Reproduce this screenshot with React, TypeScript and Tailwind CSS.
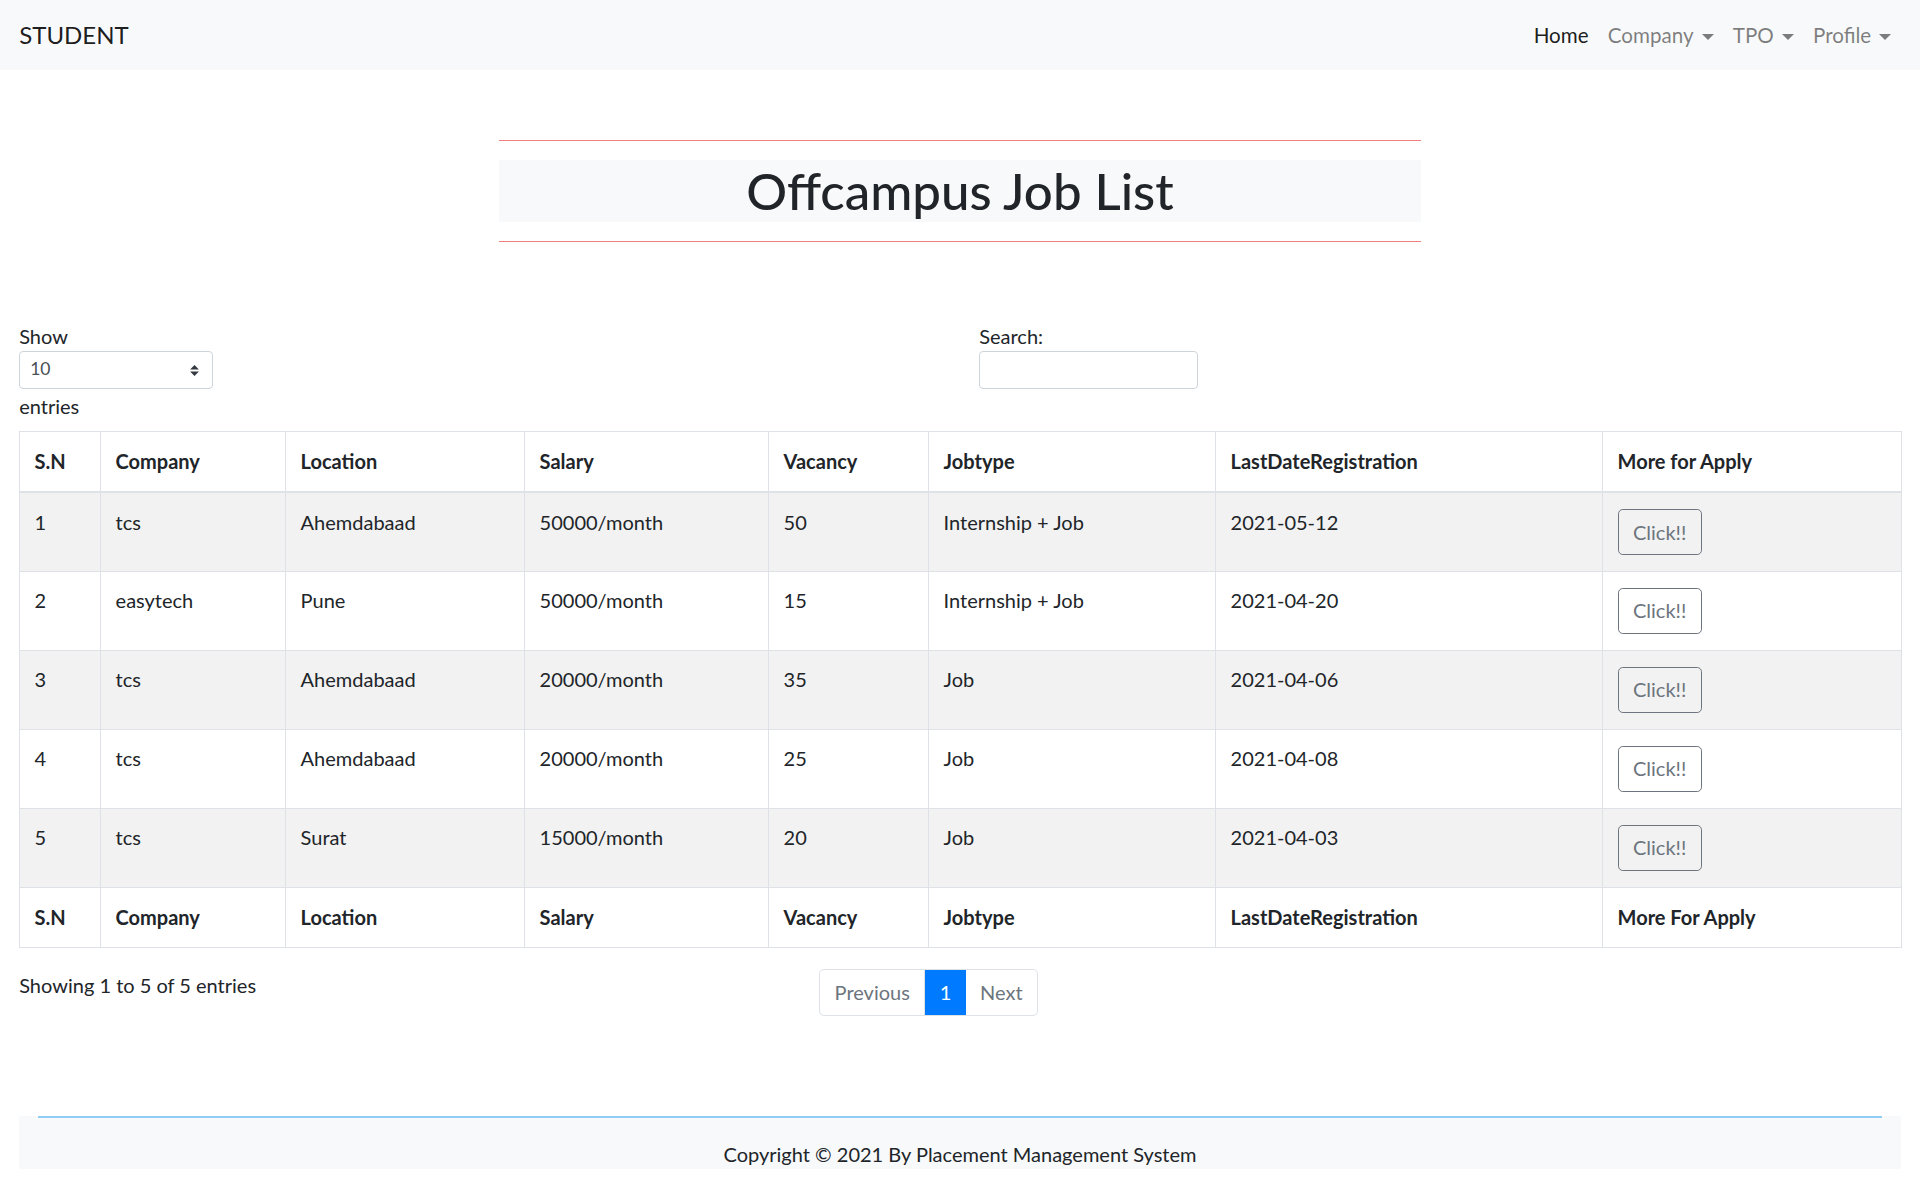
import React from "react";

const jobs = [
  { sn: 1, company: "tcs", location: "Ahemdabaad", salary: "50000/month", vacancy: 50, type: "Internship + Job", last: "2021-05-12" },
  { sn: 2, company: "easytech", location: "Pune", salary: "50000/month", vacancy: 15, type: "Internship + Job", last: "2021-04-20" },
  { sn: 3, company: "tcs", location: "Ahemdabaad", salary: "20000/month", vacancy: 35, type: "Job", last: "2021-04-06" },
  { sn: 4, company: "tcs", location: "Ahemdabaad", salary: "20000/month", vacancy: 25, type: "Job", last: "2021-04-08" },
  { sn: 5, company: "tcs", location: "Surat", salary: "15000/month", vacancy: 20, type: "Job", last: "2021-04-03" },
];

const widths = ["w-[81px]", "w-[185px]", "w-[239px]", "w-[244px]", "w-[160px]", "w-[287px]", "w-[387px]", "w-[299px]"];

function Caret() {
  return (
    <span className="ml-[8px] inline-block h-0 w-0 border-x-[6px] border-t-[6px] border-x-transparent border-t-current align-[3px]" />
  );
}

function HeadRow({ last }: { last: string }) {
  const cols = ["S.N", "Company", "Location", "Salary", "Vacancy", "Jobtype", "LastDateRegistration", last];
  return (
    <tr>
      {cols.map((c) => (
        <th key={c} className="border border-[#dee2e6] px-[14.4px] py-[15.4px] text-left font-bold">
          {c}
        </th>
      ))}
    </tr>
  );
}

export default function App() {
  return (
    <div className="min-h-[1188px] bg-white text-[20px] leading-[28.8px] text-[#212529] [font-family:Lato,'Noto_Sans',sans-serif]">
      {/* navbar */}
      <nav className="flex h-[70px] items-center justify-between bg-[#f8f9fa] px-[19.2px]">
        <span className="text-[24px] leading-[36px] text-black/90">STUDENT</span>
        <ul className="flex items-center text-[20.6px]">
          <li className="px-[9.6px] text-black/90">Home</li>
          <li className="px-[9.6px] text-black/50">
            Company
            <Caret />
          </li>
          <li className="px-[9.6px] text-black/50">
            TPO
            <Caret />
          </li>
          <li className="px-[9.6px] text-black/50">
            Profile
            <Caret />
          </li>
        </ul>
      </nav>

      {/* title */}
      <div className="mx-auto mt-[70px] w-[921.6px]">
        <div className="h-px bg-[#f08080]" />
        <h1 className="my-[19.2px] bg-[#f8f9fa] py-[2px] text-center text-[51px] leading-[57.6px] font-medium">
          Offcampus Job List
        </h1>
        <div className="h-px bg-[#f08080]" />
      </div>

      {/* datatable */}
      <div className="mt-[80px] px-[19.2px]">
        <div className="grid grid-cols-2">
          <div>
            <div>Show</div>
            <div className="relative flex h-[38px] w-[194px] items-center rounded-[4px] border border-[#ced4da] bg-white pl-[10px] text-[17.5px] text-[#495057]">
              10
              <svg className="absolute right-[13px] top-[13px]" width="9" height="11" viewBox="0 0 4 5">
                <path d="M2 0L0 2h4zm0 5L0 3h4z" fill="#343a40" />
              </svg>
            </div>
            <div className="mt-[3px]">entries</div>
          </div>
          <div className="pl-[19.2px]">
            <div>Search:</div>
            <div className="h-[38px] w-[219px] rounded-[4px] border border-[#ced4da] bg-white" />
          </div>
        </div>

        <table className="mt-[10px] w-full table-fixed border-collapse border border-[#dee2e6]">
          <colgroup>
            {widths.map((w, i) => (
              <col key={i} className={w} />
            ))}
          </colgroup>
          <thead className="[&_th]:border-b-2">
            <HeadRow last="More for Apply" />
          </thead>
          <tbody>
            {jobs.map((j, i) => (
              <tr key={j.sn} className={`h-[79px] ${i % 2 === 0 ? "bg-[#f2f2f2]" : "bg-white"}`}>
                {[j.sn, j.company, j.location, j.salary, j.vacancy, j.type, j.last].map((v, k) => (
                  <td key={k} className="border border-[#dee2e6] px-[14.4px] pt-[14.4px] align-top">
                    {v}
                  </td>
                ))}
                <td className="border border-[#dee2e6] px-[14.4px] pt-[16px] align-top">
                  <button className="h-[46px] rounded-[4.8px] border border-[#6c757d] px-[14.4px] text-[#6c757d]">
                    Click!!
                  </button>
                </td>
              </tr>
            ))}
          </tbody>
          <tfoot>
            <HeadRow last="More For Apply" />
          </tfoot>
        </table>

        <div className="mt-[21px] grid grid-cols-[5fr_7fr]">
          <div className="pt-[2px]">Showing 1 to 5 of 5 entries</div>
          <div className="pl-[16px]">
            <div className="inline-flex h-[47px] rounded-[4.8px] border border-[#dee2e6]">
              <span className="flex items-center border-r border-[#dee2e6] px-[14.4px] text-[#6c757d]">Previous</span>
              <span className="flex items-center bg-[#007bff] px-[14.4px] text-white">1</span>
              <span className="flex items-center px-[14.4px] text-[#6c757d]">Next</span>
            </div>
          </div>
        </div>
      </div>

      {/* footer */}
      <footer className="mx-[19.2px] mt-[100px] bg-[#f8f9fa] px-[19.2px]">
        <div className="h-[2px] bg-[#8ecdf5]" />
        <p className="pt-[22px] text-center">Copyright © 2021 By Placement Management System</p>
      </footer>
    </div>
  );
}
